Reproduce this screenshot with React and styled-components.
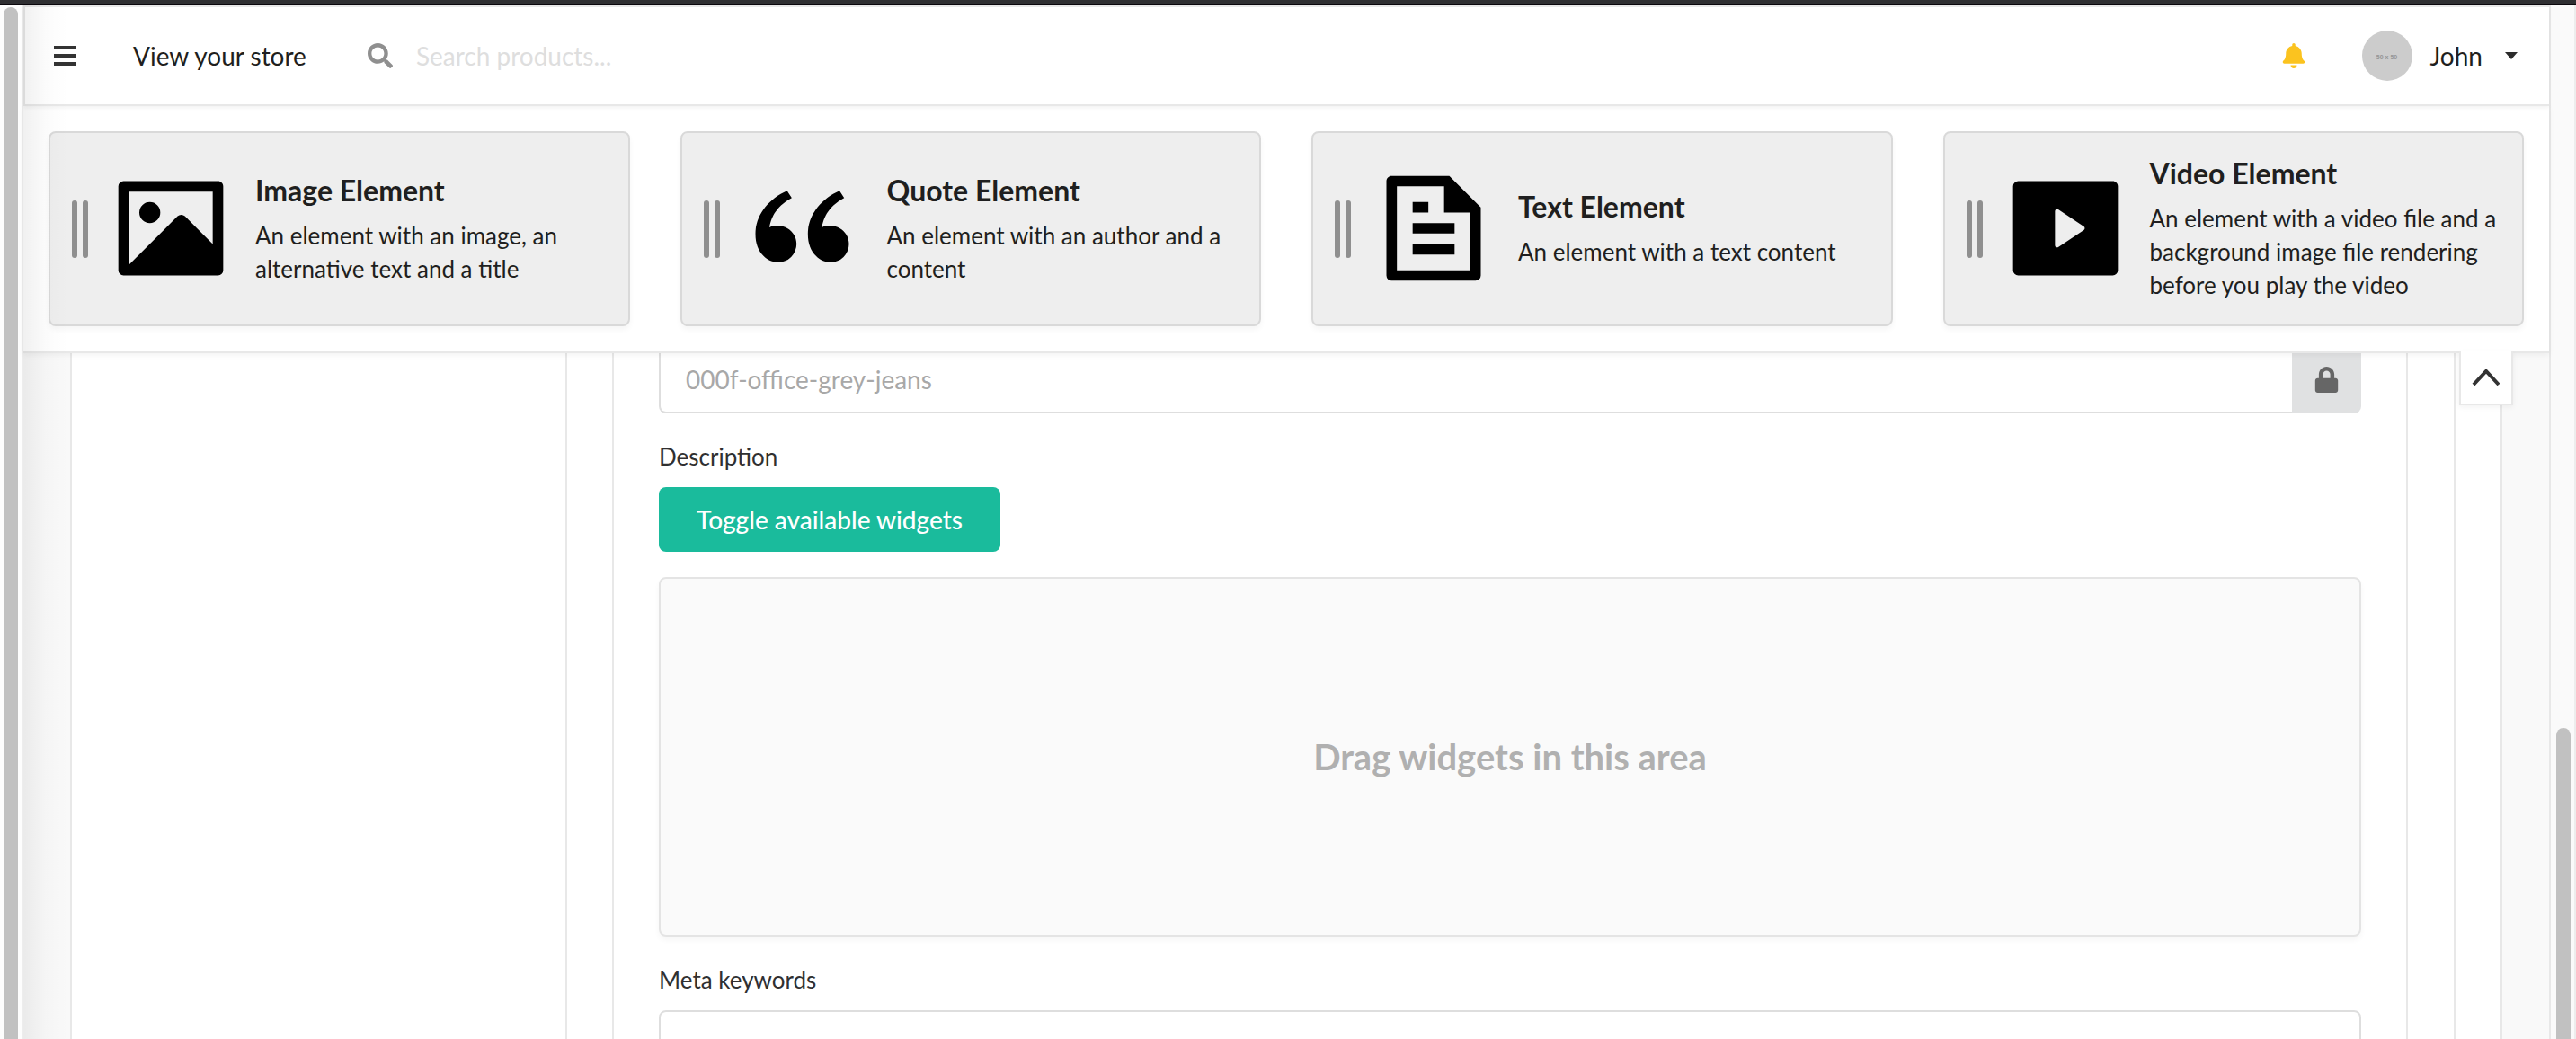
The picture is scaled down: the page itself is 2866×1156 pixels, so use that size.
import React from "react";
import styled, { createGlobalStyle, css } from "styled-components";
import { FaLock, FaBell, FaSearch } from "react-icons/fa";

const GlobalStyle = createGlobalStyle`
  * { box-sizing: border-box; }
  body {
    margin: 0;
    background: #f9f9f9;
    color: #1f1f20;
    font-family: Lato, "Liberation Sans", sans-serif;
    font-size: 28px;
    line-height: 40px;
  }
  button, input { font: inherit; color: inherit; }
  h3, p { margin: 0; }
`;

const Window = styled.div`
  display: flex;
  flex-direction: column;
  height: 100vh;
  overflow: hidden;
`;

const WindowEdge = styled.div`
  flex: none;
  height: 6px;
  background: #2f2f32;
  border-bottom: 2px solid #0b080d;
`;

const Columns = styled.div`
  display: flex;
  flex: 1;
  min-height: 0;
`;

const LeftRail = styled.div`
  flex: none;
  width: 26px;
  padding: 2px 0 0 4px;
  background: #fdfdfd;
  border-right: 2px solid #ededed;
`;

const RightRail = styled.div`
  flex: none;
  width: 30px;
  padding: 804px 0 0 6px;
  background: #fafafa;
  border-left: 2px solid #e8e8e8;
  border-right: 2px solid #ededed;
`;

const Thumb = styled.div`
  width: 16px;
  height: 100%;
  border-radius: 8px 8px 0 0;
  background: #c1c1c1;
`;

const Main = styled.div`
  position: relative;
  display: flex;
  flex: 1;
  flex-direction: column;
  min-width: 0;

  &::after {
    content: "";
    position: absolute;
    inset: 0 auto 0 0;
    width: 50px;
    z-index: 3;
    pointer-events: none;
    background: linear-gradient(to right, rgba(0, 0, 0, 0.06), rgba(0, 0, 0, 0.015) 50%, transparent);
  }
`;

const TopBar = styled.header`
  position: relative;
  z-index: 2;
  display: flex;
  flex: none;
  align-items: center;
  height: 112px;
  padding: 0 34px 0 32px;
  background: #fff;
  border: 2px solid #e8e8e8;
  border-right: 0;
  box-shadow: 0 2px 4px rgba(34, 36, 38, 0.06);
`;

const PlainButton = styled.button`
  display: flex;
  align-items: center;
  padding: 0;
  border: 0;
  background: none;
  svg { display: block; }
`;

const StoreLink = styled.a`
  margin: 0 68px 0 64px;
  color: inherit;
  text-decoration: none;
`;

const Search = styled.label`
  display: flex;
  flex: 1;
  align-items: center;
  gap: 26px;
  color: #8f8f8f;
`;

const SearchInput = styled.input`
  width: 400px;
  padding: 0;
  border: 0;
  outline: 0;
  background: none;
  &::placeholder { color: #dedede; opacity: 1; }
`;

const UserButton = styled(PlainButton)`
  margin-left: 62px;
  svg { margin-left: 24px; }
`;

const Avatar = styled.span`
  width: 56px;
  height: 56px;
  margin-right: 20px;
  border-radius: 50%;
  background: #ccc;
  color: #969696;
  font-family: "Liberation Sans", sans-serif;
  font-size: 7px;
  font-weight: 700;
  line-height: 60px;
  text-align: center;
`;

const WidgetPanel = styled.section`
  position: relative;
  z-index: 1;
  display: grid;
  flex: none;
  grid-template-columns: repeat(4, 1fr);
  gap: 56px;
  padding: 28px;
  background: #fff;
  border-bottom: 2px solid #e8e8e8;
  box-shadow: 0 2px 6px rgba(34, 36, 38, 0.06);
`;

const Widget = styled.article`
  display: flex;
  align-items: center;
  min-height: 217px;
  padding: 22px 24px;
  background: #eee;
  border: 2px solid #d9d9d9;
  border-radius: 8px;
  box-shadow: 0 4px 6px rgba(34, 36, 38, 0.04);
`;

const Grip = styled.div`
  flex: none;
  display: flex;
  justify-content: space-between;
  width: 18px;
  height: 64px;

  &::before,
  &::after {
    content: "";
    width: 6px;
    border-radius: 3px;
    background: #8f8f8f;
  }
`;

const WidgetIcon = styled.svg`
  flex: none;
  width: 140px;
  height: 140px;
  margin: 0 24px 2px 22px;
  fill: #000;
`;

const WidgetTitle = styled.h3`
  margin-bottom: 12px;
  font-size: 32px;
  line-height: 40px;
`;

const WidgetText = styled.p`
  font-size: 26px;
  line-height: 37px;
`;

const CollapseButton = styled.button`
  position: absolute;
  top: 100%;
  right: 40px;
  display: grid;
  place-items: center;
  width: 60px;
  height: 60px;
  padding: 0;
  border: 2px solid #e8e8e8;
  border-top: 0;
  background: #fff;
  color: #333;
  box-shadow: 0 2px 6px rgba(34, 36, 38, 0.06);
`;

const Page = styled.main`
  display: flex;
  flex: 1;
  min-height: 0;
  margin-top: -10px;
  padding: 0 52px;
`;

const line = css`2px solid #e8e8e8`;

const Segment = styled.div`
  display: flex;
  flex: 1;
  min-width: 0;
  padding-right: 50px;
  background: #fff;
  border-left: ${line};
  border-right: ${line};
`;

const SideMenu = styled.aside`
  flex: none;
  width: 549px;
`;

const TabSegment = styled.div`
  display: flex;
  flex: 1;
  min-width: 0;
  padding: 0 51px 0 50px;
  border-left: ${line};
  border-right: ${line};
`;

const Form = styled.form`
  flex: 1;
  min-width: 0;
  height: 1000px;
  padding: 0 50px;
  border-left: ${line};
  border-right: ${line};
`;

const LabeledInput = styled.div`
  display: flex;
  height: 77px;
`;

const TextInput = styled.input`
  flex: 1;
  min-width: 0;
  width: 100%;
  height: 77px;
  padding: 0 28px;
  border: 2px solid #dedede;
  border-radius: ${(p) => (p.$joined ? "8px 0 0 8px" : "8px")};
  border-right-width: ${(p) => (p.$joined ? "0" : "2px")};
  background: #fff;
  outline: 0;
  &:read-only { color: #a8a8a8; }
`;

const LockButton = styled.button`
  display: grid;
  place-items: center;
  width: 77px;
  padding: 2px 0 0;
  border: 0;
  border-radius: 0 8px 8px 0;
  background: #e0e1e2;
  color: #666;
`;

const Label = styled.label`
  display: block;
  margin: 28px 0 14px;
  color: #303031;
  font-size: 26px;
`;

const ToggleButton = styled.button`
  display: block;
  height: 72px;
  padding: 0 42px;
  border: 0;
  border-radius: 8px;
  background: #1abb9c;
  color: #fff;
  font-weight: 500;
`;

const DropArea = styled.div`
  display: grid;
  place-items: center;
  height: 400px;
  margin-top: 28px;
  border: 2px solid #e4e4e4;
  border-radius: 8px;
  background: #fafafa;
  color: #b0b0b0;
  font-size: 40px;
  font-weight: 700;
  box-shadow: 0 4px 6px rgba(34, 36, 38, 0.04);
`;

const widgets = [
  {
    title: "Image Element",
    text: "An element with an image, an alternative text and a title",
    path: "M20 5H4v14l9.292-9.294a1 1 0 0 1 1.414 0L20 15.01V5zM2 3.993A1 1 0 0 1 2.992 3h18.016c.548 0 .992.445.992.993v16.014a1 1 0 0 1-.992.993H2.992A.993.993 0 0 1 2 20.007V3.993zM8 11a2 2 0 1 1 0-4 2 2 0 0 1 0 4z",
  },
  {
    title: "Quote Element",
    text: "An element with an author and a content",
    path: "M4.583 17.321C3.553 16.227 3 15 3 13.011c0-3.5 2.457-6.637 6.03-8.188l.893 1.378c-3.335 1.804-3.987 4.145-4.247 5.621.537-.278 1.24-.375 1.929-.311 1.804.167 3.226 1.648 3.226 3.489a3.5 3.5 0 0 1-3.5 3.5c-1.073 0-2.099-.49-2.748-1.179zm10 0C13.553 16.227 13 15 13 13.011c0-3.5 2.457-6.637 6.03-8.188l.893 1.378c-3.335 1.804-3.987 4.145-4.247 5.621.537-.278 1.24-.375 1.929-.311 1.804.167 3.226 1.648 3.226 3.489a3.5 3.5 0 0 1-3.5 3.5c-1.073 0-2.099-.49-2.748-1.179z",
  },
  {
    title: "Text Element",
    text: "An element with a text content",
    path: "M21 8v12.993A1 1 0 0 1 20.007 22H3.993A.993.993 0 0 1 3 21.008V2.992C3 2.455 3.449 2 4.002 2h10.995L21 8zm-2 1h-5V4H5v16h14V9zM8 7h3v2H8V7zm0 4h8v2H8v-2zm0 4h8v2H8v-2z",
  },
  {
    title: "Video Element",
    text: "An element with a video file and a background image file rendering before you play the video",
    path: "M2 3.993A1 1 0 0 1 2.992 3h18.016c.548 0 .992.445.992.993v16.014a1 1 0 0 1-.992.993H2.992A.993.993 0 0 1 2 20.007V3.993zm8.622 4.422a.4.4 0 0 0-.622.332v6.506a.4.4 0 0 0 .622.332l4.879-3.252a.4.4 0 0 0 0-.666l-4.88-3.252z",
  },
];

export default function App() {
  return (
    <>
      <GlobalStyle />
      <Window>
        <WindowEdge />
        <Columns>
          <LeftRail><Thumb /></LeftRail>
          <Main>
            <TopBar>
              <PlainButton type="button" aria-label="Menu">
                <svg width="24" height="24" fill="#333">
                  <path d="M0 1h24v4H0zM0 10h24v4H0zM0 19h24v4H0z" />
                </svg>
              </PlainButton>
              <StoreLink href="#store">View your store</StoreLink>
              <Search>
                <FaSearch size={28} aria-hidden="true" />
                <SearchInput type="text" aria-label="Search products" placeholder="Search products..." />
              </Search>
              <PlainButton type="button" aria-label="Notifications">
                <FaBell size={28} color="#fbc31f" />
              </PlainButton>
              <UserButton type="button">
                <Avatar>50 x 50</Avatar>
                John
                <svg width="16" height="10" fill="#2b2b2b"><path d="M1 1h14L8 9z" /></svg>
              </UserButton>
            </TopBar>
            <WidgetPanel>
              {widgets.map((w) => (
                <Widget key={w.title}>
                  <Grip />
                  <WidgetIcon viewBox="0 0 24 24" aria-hidden="true"><path d={w.path} /></WidgetIcon>
                  <div>
                    <WidgetTitle>{w.title}</WidgetTitle>
                    <WidgetText>{w.text}</WidgetText>
                  </div>
                </Widget>
              ))}
              <CollapseButton type="button" aria-label="Collapse widgets">
                <svg width="32" height="20" fill="none" stroke="currentColor" strokeWidth="4">
                  <path d="M2 18 16 3l14 15" />
                </svg>
              </CollapseButton>
            </WidgetPanel>
            <Page>
              <Segment>
                <SideMenu />
                <TabSegment>
                  <Form>
                    <LabeledInput>
                      <TextInput $joined type="text" aria-label="Slug" readOnly value="000f-office-grey-jeans" />
                      <LockButton type="button" aria-label="Unlock slug"><FaLock size={29} /></LockButton>
                    </LabeledInput>
                    <Label as="div">Description</Label>
                    <ToggleButton type="button">Toggle available widgets</ToggleButton>
                    <DropArea>Drag widgets in this area</DropArea>
                    <Label htmlFor="meta-keywords">Meta keywords</Label>
                    <TextInput id="meta-keywords" type="text" />
                  </Form>
                </TabSegment>
              </Segment>
            </Page>
          </Main>
          <RightRail><Thumb /></RightRail>
        </Columns>
      </Window>
    </>
  );
}
